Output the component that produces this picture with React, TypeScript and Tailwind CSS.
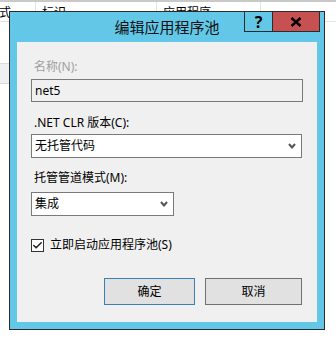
import { Check } from "lucide-react";

const font = { fontFamily: '"Noto Sans", "Noto Sans CJK SC", sans-serif' };

function Chevron() {
  return (
    <svg width="8" height="6" viewBox="0 0 8 6" className="shrink-0">
      <path d="M1 1 L4 4.5 L7 1" fill="none" stroke="#555" strokeWidth="2" />
    </svg>
  );
}

function Select({ value, width }: { value: string; width: string }) {
  return (
    <div
      className={`flex h-[24px] items-center justify-between border border-[#7a7a7a] bg-white pl-[3px] pr-[5px] text-[12px] text-black ${width}`}
    >
      <span>{value}</span>
      <Chevron />
    </div>
  );
}

export default function App() {
  return (
    <div
      className="relative h-[351px] w-[336px] overflow-hidden bg-white"
      style={font}
    >
      {/* list behind the dialog */}
      <div className="flex h-[22px] border-t-2 border-b border-t-[#c9c9c9] border-b-[#e3e3e3] text-[12px] text-black">
        <div className="w-[36px] overflow-hidden border-r border-[#e3e3e3] pt-[2px] whitespace-nowrap">
          <span className="-ml-[13px] inline-block">模式</span>
        </div>
        <div className="w-[121px] border-r border-[#e3e3e3] pl-[6px] pt-[2px]">标识</div>
        <div className="w-[104px] border-r border-[#e3e3e3] pl-[6px] pt-[2px]">应用程序</div>
      </div>
      <div className="mt-[41px] h-[21px] w-[200px] border-y border-[#dadada] bg-[#f0f0f0]" />

      {/* dialog */}
      <div className="absolute left-[9px] top-[11px] flex h-[319px] w-[316px] flex-col border border-[#2b2b2b] bg-[#63c8e8]">
        <div className="relative flex h-[30px] shrink-0 items-center justify-center">
          <span className="text-[15px] text-[#111]">编辑应用程序池</span>
          <div className="absolute -top-[1px] right-[4px] flex h-[21px]">
            <div className="flex w-[29px] items-center justify-center border border-[#2b2b2b] text-[16px] leading-none font-bold text-black">
              ?
            </div>
            <div className="-ml-[1px] flex w-[48px] items-center justify-center border border-[#2b2b2b] bg-[#c75050]">
              <svg width="12" height="10" viewBox="0 0 12 10">
                <path d="M1.5 1 L10.5 9 M10.5 1 L1.5 9" stroke="#000" strokeWidth="2.4" />
              </svg>
            </div>
          </div>
        </div>

        <div className="mx-[7px] flex h-[280px] flex-col bg-[#f0f0f0] px-[14px] text-[12px] leading-[16px] text-black">
          <div className="mt-[17px] pl-[3px] text-[#a0a0a0]">名称(N):</div>
          <div className="mt-[4px] flex h-[23px] items-center border border-[#7a7a7a] pl-[3px]">net5</div>

          <div className="mt-[13px] pl-[3px]">.NET CLR 版本(C):</div>
          <div className="mt-[3px]">
            <Select value="无托管代码" width="w-[271px]" />
          </div>

          <div className="mt-[12px] pl-[3px]">托管管道模式(M):</div>
          <div className="mt-[6px]">
            <Select value="集成" width="w-[143px]" />
          </div>

          <label className="mt-[21px] flex items-center gap-[6px]">
            <span className="flex h-[13px] w-[13px] items-center justify-center border border-[#333] bg-white">
              <Check size={11} strokeWidth={3.5} color="#222" />
            </span>
            <span>立即启动应用程序池(S)</span>
          </label>

          <div className="mt-[25px] flex gap-[10px] pl-[73px]">
            <button className="h-[27px] w-[91px] border border-[#3c7fb1] bg-[#e1e1e1] text-[12px] text-black">
              确定
            </button>
            <button className="h-[27px] w-[97px] border border-[#707070] bg-[#e1e1e1] text-[12px] text-black">
              取消
            </button>
          </div>
        </div>
      </div>
    </div>
  );
}
